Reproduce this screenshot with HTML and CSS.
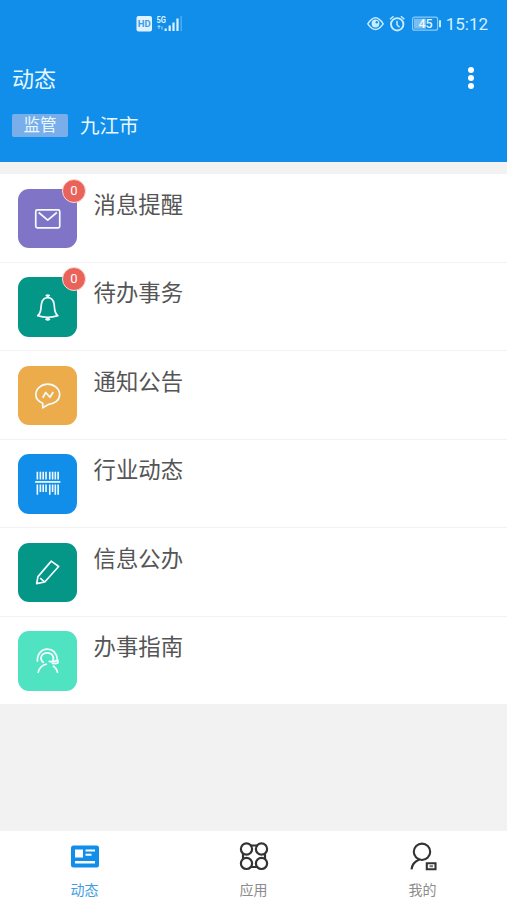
FILE: index.html
```html
<!DOCTYPE html>
<html lang="zh-CN">

<head>
	<meta charset="UTF-8">
	<title>动态</title>
	<link rel="stylesheet" href="styles.css">
</head>

<body>
	<div class="app">

		<header class="header">
			<div class="status">
				<svg class="status-left" width="50" height="20" viewBox="0 0 50 20">
					<rect x="1.500" y="2" width="15.500" height="15.500" rx="2" fill="#dff2ff" />
					<text x="9.200" y="13" class="hd" text-anchor="middle">HD</text>
					<text x="21.500" y="8.500" class="net" textLength="9.500" lengthAdjust="spacingAndGlyphs">5G</text>
					<path d="M24 11v4M22.500 12.500h3M27 12.500v3" stroke="#a8d8fb" stroke-width="1" fill="none" />
					<path d="M30.700 14.500v2.500M34.700 11.500v5.500M38.500 8.500v8.500M42.500 4.500v12.500" stroke="#dff2ff" stroke-width="2.200" />
					<path d="M46.200 2v15" stroke="#4fadf3" stroke-width="1.500" />
				</svg>
				<svg class="status-right" width="76" height="20" viewBox="0 0 76 20" fill="none" stroke="#c9ecff" stroke-width="1.500">
					<path d="M1.800 9.800Q9.500-2.500 17.200 9.800Q9.500 21 1.800 9.800z" />
					<circle cx="9.500" cy="9.500" r="3.900" fill="#c9ecff" stroke="none" />
					<circle cx="10.800" cy="8.200" r="1.200" fill="#108ee9" stroke="none" />
					<circle cx="31.200" cy="10.300" r="6.200" stroke-width="1.900" />
					<path d="M31 6.700v4l2.500 2.500M24 5.200l3.500-3M38.400 5.200l-3.500-3" />
					<rect x="46.600" y="3.200" width="25" height="13" rx="2" stroke="#8ccbf8" stroke-width="1.200" />
					<rect x="48" y="4.700" width="12" height="10" fill="#79bdf3" stroke="none" />
					<path d="M74 6.200v7" stroke-width="2" />
					<text x="59.500" y="13.900" class="battery" text-anchor="middle">45</text>
				</svg>
				<span class="time">15:12</span>
			</div>
			<div class="title-bar">
				<h1>动态</h1>
				<div class="more"><i></i><i></i><i></i></div>
			</div>
			<div class="place">
				<span class="tag">监管</span>
				<span class="city">九江市</span>
			</div>
		</header>

		<ul class="list">
			<li>
				<div class="tile purple">
					<svg viewBox="0 0 59 59">
						<rect x="17.600" y="20.800" width="23.800" height="17.700" rx="1.500" />
						<path d="M20.500 23.300l9 7.500 9-7.500" />
					</svg>
					<span class="badge">0</span>
				</div>
				<span class="name">消息提醒</span>
			</li>
			<li>
				<div class="tile green">
					<svg viewBox="0 0 59 59">
						<path d="M19.500 38.300C23.700 35 22.300 31 23.300 26.500Q24.500 20.500 29.500 20.500T35.700 26.500C36.700 31 35.300 35 39.500 38.300Q29.500 41.500 19.500 38.300z" />
						<path d="M28 19.300q1.500-1.800 3 0M27.700 41q1.800 2.200 3.600 0" stroke-width="2.600" />
					</svg>
					<span class="badge">0</span>
				</div>
				<span class="name">待办事务</span>
			</li>
			<li>
				<div class="tile orange">
					<svg viewBox="0 0 59 59">
						<path d="M24.500 37C20 35.200 17.700 32.200 17.700 28.300C17.700 22.300 23.300 18 29.500 18S41.300 22.300 41.300 28.300C41.300 34 36.300 37.400 30.500 38L24.500 41.500z" />
						<path d="M24.500 31.500l3-5.200 4.200 4.700 3.200-5.200" />
					</svg>
				</div>
				<span class="name">通知公告</span>
			</li>
			<li>
				<div class="tile blue">
					<svg viewBox="0 0 59 59">
						<path d="M17 27.700h25" />
						<path d="M19.200 17.700v7.500M22.200 17.700v7.500M25 17.700v7.500M27.800 17.700v7.500M31.500 17.700v7.500M34.300 17.700v7.500M37 17.700v7.500M39.800 17.700v7.500M19.200 30.200v10.300M22.200 30.200v7.500M25 30.200v7.500M27.800 30.200v7.500M31.500 30.200v10.300M34.300 30.200v7.500M37 30.200v10.300M39.800 30.200v10.300" stroke-width="1.600" />
					</svg>
				</div>
				<span class="name">行业动态</span>
			</li>
			<li>
				<div class="tile green">
					<svg viewBox="0 0 59 59">
						<path d="M18.500 40.300l1.300-7L33 18l7.300 5.300L26.500 38.700zM22 34.800l4.500 3.900" />
					</svg>
				</div>
				<span class="name">信息公办</span>
			</li>
			<li>
				<div class="tile mint">
					<svg viewBox="0 0 59 59">
						<path d="M19.300 30.500C18.500 23 23.500 18 29 18C34.800 18 38.300 22.300 39 28.500" />
						<path d="M25.500 31.500C20 27 24 21.600 29 21.600C34.500 21.600 37 27 33.500 31M30.500 29.800q3 2 9-1v3q-3 .8-6 .2" />
						<path d="M19.800 41.500q1.800-7.500 9-8.800M34.500 34.500q4 2.500 4.800 7" />
					</svg>
				</div>
				<span class="name">办事指南</span>
			</li>
		</ul>

		<nav class="tabs">
			<a class="tab active">
				<svg width="30" height="30" viewBox="0 0 30 30">
					<rect x="1" y="4.500" width="28" height="22" rx="2.500" fill="#108ee9" />
					<path d="M5 8.500h8v8H5zM15.500 8.500H25v2h-9.500zM15.500 12.800h6v2h-6zM5 20h20v2.500H5z" fill="#fff" />
				</svg>
				<span>动态</span>
			</a>
			<a class="tab">
				<svg width="30" height="30" viewBox="0 0 30 30" fill="none" stroke="#333" stroke-width="2.200">
					<circle cx="7.500" cy="8" r="5.600" />
					<circle cx="22.500" cy="8" r="5.600" />
					<circle cx="7.500" cy="22.400" r="5.600" />
					<circle cx="22.500" cy="22.400" r="5.600" />
					<path d="M11 4.500h8M11 26h8M4 12.500v5.500M26 12.500v5.500" />
				</svg>
				<span>应用</span>
			</a>
			<a class="tab">
				<svg width="30" height="30" viewBox="0 0 30 30" fill="none" stroke="#333" stroke-width="2.100">
					<circle cx="14" cy="10.800" r="8.200" />
					<path d="M11.500 18.500Q4.500 21 3.500 28.300" />
					<path d="M18.800 22.200h8.700v6h-8.700z" />
					<path d="M21.500 25.200h3.500" stroke="#777" />
				</svg>
				<span>我的</span>
			</a>
		</nav>

	</div>
</body>

</html>
```
FILE: styles.css
```css
* {
	box-sizing: border-box;
}

body {
	margin: 0;
	background: #f2f2f2;
	font-family: Roboto, "Noto Sans CJK SC", sans-serif;
}

.app {
	display: flex;
	flex-direction: column;
	height: 900px;
}

.header {
	height: 162px;
	background: #108ee9;
	color: #e8f8ff;
}

.status {
	display: flex;
	align-items: center;
	height: 48px;
	padding: 0 19px 0 135px;
}

.status-right {
	margin-left: auto;
}

.hd {
	font: bold 9.5px Roboto, sans-serif;
	fill: #3b9be6;
}

.net {
	font: bold 9px Roboto, sans-serif;
	fill: #dff2ff;
}

.battery {
	font: 500 12.5px Roboto, sans-serif;
	fill: #e8f8ff;
	stroke: none;
}

.time {
	margin-left: 4px;
	font-size: 17px;
	color: #d5f0ff;
}

.title-bar {
	display: flex;
	align-items: center;
	justify-content: space-between;
	height: 60px;
	padding: 0 33px 0 12px;
}

h1 {
	margin: 0;
	padding-bottom: 3px;
	font-size: 22px;
	font-weight: 400;
}

.more {
	display: flex;
	flex-direction: column;
	gap: 2px;
}

.more i {
	width: 6px;
	height: 6px;
	border-radius: 50%;
	background: #fff;
}

.place {
	display: flex;
	align-items: center;
	height: 34px;
	padding-left: 12px;
}

.tag {
	width: 56px;
	height: 23px;
	border-radius: 2px;
	background: #79aeeb;
	font-size: 16.5px;
	line-height: 23px;
	text-align: center;
}

.city {
	margin-left: 12px;
	padding-bottom: 2px;
	font-size: 19.5px;
}

.list {
	margin: 12px 0 0;
	padding: 0;
	list-style: none;
	background: #fff;
}

.list li {
	display: flex;
	height: 88.5px;
	padding: 14.5px 18px 0 17.5px;
	border-bottom: 1px solid #f2f2f2;
}

.tile {
	position: relative;
	width: 59.5px;
	height: 59.5px;
	border-radius: 11px;
}

.tile svg {
	display: block;
	fill: none;
	stroke: #f2fbff;
	stroke-width: 1.7;
	stroke-linejoin: round;
}

.purple {
	background: #8074c6;
}

.green {
	background: #049787;
}

.orange {
	background: #ecac4c;
}

.blue {
	background: #108ee9;
}

.mint {
	background: #50e3c2;
}

.badge {
	position: absolute;
	top: -10px;
	right: -9px;
	width: 24px;
	height: 24px;
	border: 1px solid #fbdcd8;
	border-radius: 50%;
	background: #e9635a;
	color: #fff;
	font-size: 13px;
	line-height: 22px;
	text-align: center;
}

.name {
	margin-left: 16.5px;
	color: #555;
	font-size: 22.4px;
	line-height: 33px;
}

.tabs {
	display: flex;
	height: 69.5px;
	margin-top: auto;
	background: #fff;
}

.tab {
	display: flex;
	flex: 1;
	flex-direction: column;
	align-items: center;
	padding-top: 10px;
	color: #8c8c8c;
	font-size: 14px;
}

.tab span {
	margin-top: 9px;
	line-height: 20px;
}

.active {
	color: #3f9de3;
}
```
